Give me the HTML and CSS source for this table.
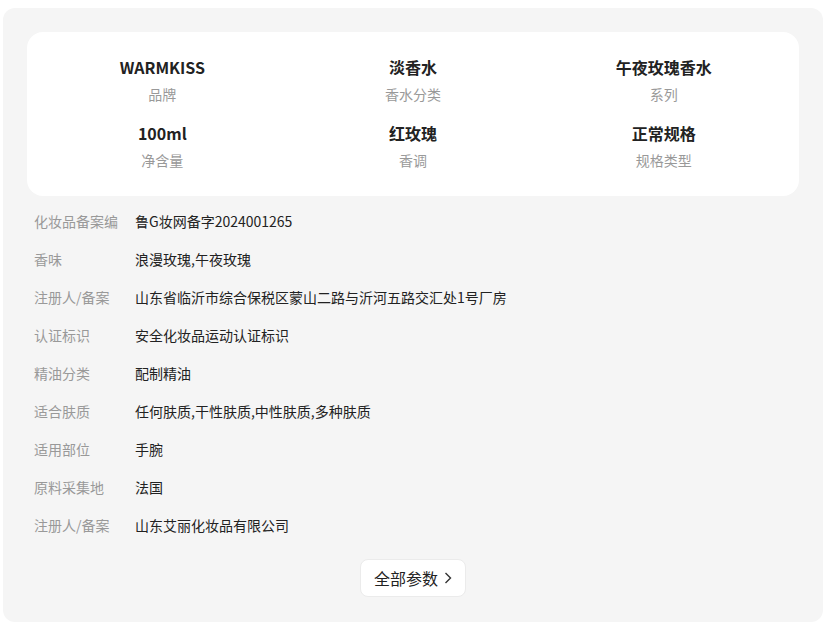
FILE: index.html
```html
<!DOCTYPE html>
<html lang="zh-CN">
<head>
<meta charset="utf-8">
<link rel="stylesheet" href="styles.css">
</head>
<body>
<div class="panel">
  <div class="summary">
    <div class="cell"><div class="val">WARMKISS</div><div class="lab">品牌</div></div>
    <div class="cell"><div class="val">淡香水</div><div class="lab">香水分类</div></div>
    <div class="cell"><div class="val">午夜玫瑰香水</div><div class="lab">系列</div></div>
    <div class="cell"><div class="val">100ml</div><div class="lab">净含量</div></div>
    <div class="cell"><div class="val">红玫瑰</div><div class="lab">香调</div></div>
    <div class="cell"><div class="val">正常规格</div><div class="lab">规格类型</div></div>
  </div>
  <div class="params">
    <div class="row"><div class="k">化妆品备案编</div><div class="v">鲁G妆网备字2024001265</div></div>
    <div class="row"><div class="k">香味</div><div class="v">浪漫玫瑰,午夜玫瑰</div></div>
    <div class="row"><div class="k">注册人/备案</div><div class="v">山东省临沂市综合保税区蒙山二路与沂河五路交汇处1号厂房</div></div>
    <div class="row"><div class="k">认证标识</div><div class="v">安全化妆品运动认证标识</div></div>
    <div class="row"><div class="k">精油分类</div><div class="v">配制精油</div></div>
    <div class="row"><div class="k">适合肤质</div><div class="v">任何肤质,干性肤质,中性肤质,多种肤质</div></div>
    <div class="row"><div class="k">适用部位</div><div class="v">手腕</div></div>
    <div class="row"><div class="k">原料采集地</div><div class="v">法国</div></div>
    <div class="row"><div class="k">注册人/备案</div><div class="v">山东艾丽化妆品有限公司</div></div>
  </div>
  <div class="more-wrap">
    <button class="more">全部参数<svg class="chev" width="8" height="12" viewBox="0 0 8 12"><path d="M1.5 1 L6.5 6 L1.5 11" fill="none" stroke="#333" stroke-width="1.4"/></svg></button>
  </div>
</div>
</body>
</html>
```

FILE: styles.css
```css
* { box-sizing: border-box; }
html, body { background: #fff; }
body {
  margin: 8px 13px 11px 3px;
  font-family: "Noto Sans CJK SC", "Noto Sans", sans-serif;
}
.panel {
  background: #f5f5f5;
  border-radius: 12px;
  padding: 24px;
  height: 614px;
}
.summary {
  background: #fff;
  border-radius: 16px;
  padding: 24px 10px 26px;
  display: grid;
  grid-template-columns: repeat(3, 1fr);
  row-gap: 18px;
}
.cell { text-align: center; }
.val {
  font-size: 16px;
  line-height: 22px;
  font-weight: 700;
  color: #222;
}
.lab {
  margin-top: 6px;
  font-size: 14px;
  line-height: 20px;
  color: #999;
}
.params {
  margin-top: 6px;
  padding: 0 7px;
}
.row {
  display: flex;
  height: 38px;
  align-items: center;
  font-size: 14px;
}
.k {
  width: 101px;
  white-space: nowrap;
  color: #999;
  flex: none;
}
.v { color: #222; white-space: nowrap; }
.more-wrap {
  display: flex;
  justify-content: center;
  margin-top: 15px;
}
.more {
  height: 38px;
  width: 106px;
  background: #fff;
  border: 1px solid #ebebeb;
  border-radius: 8px;
  font-family: "Noto Sans CJK SC", sans-serif;
  font-size: 16px;
  color: #222;
  display: flex;
  align-items: center;
  justify-content: center;
  gap: 6px;
  padding: 0;
}
.chev { display: block; }
```
